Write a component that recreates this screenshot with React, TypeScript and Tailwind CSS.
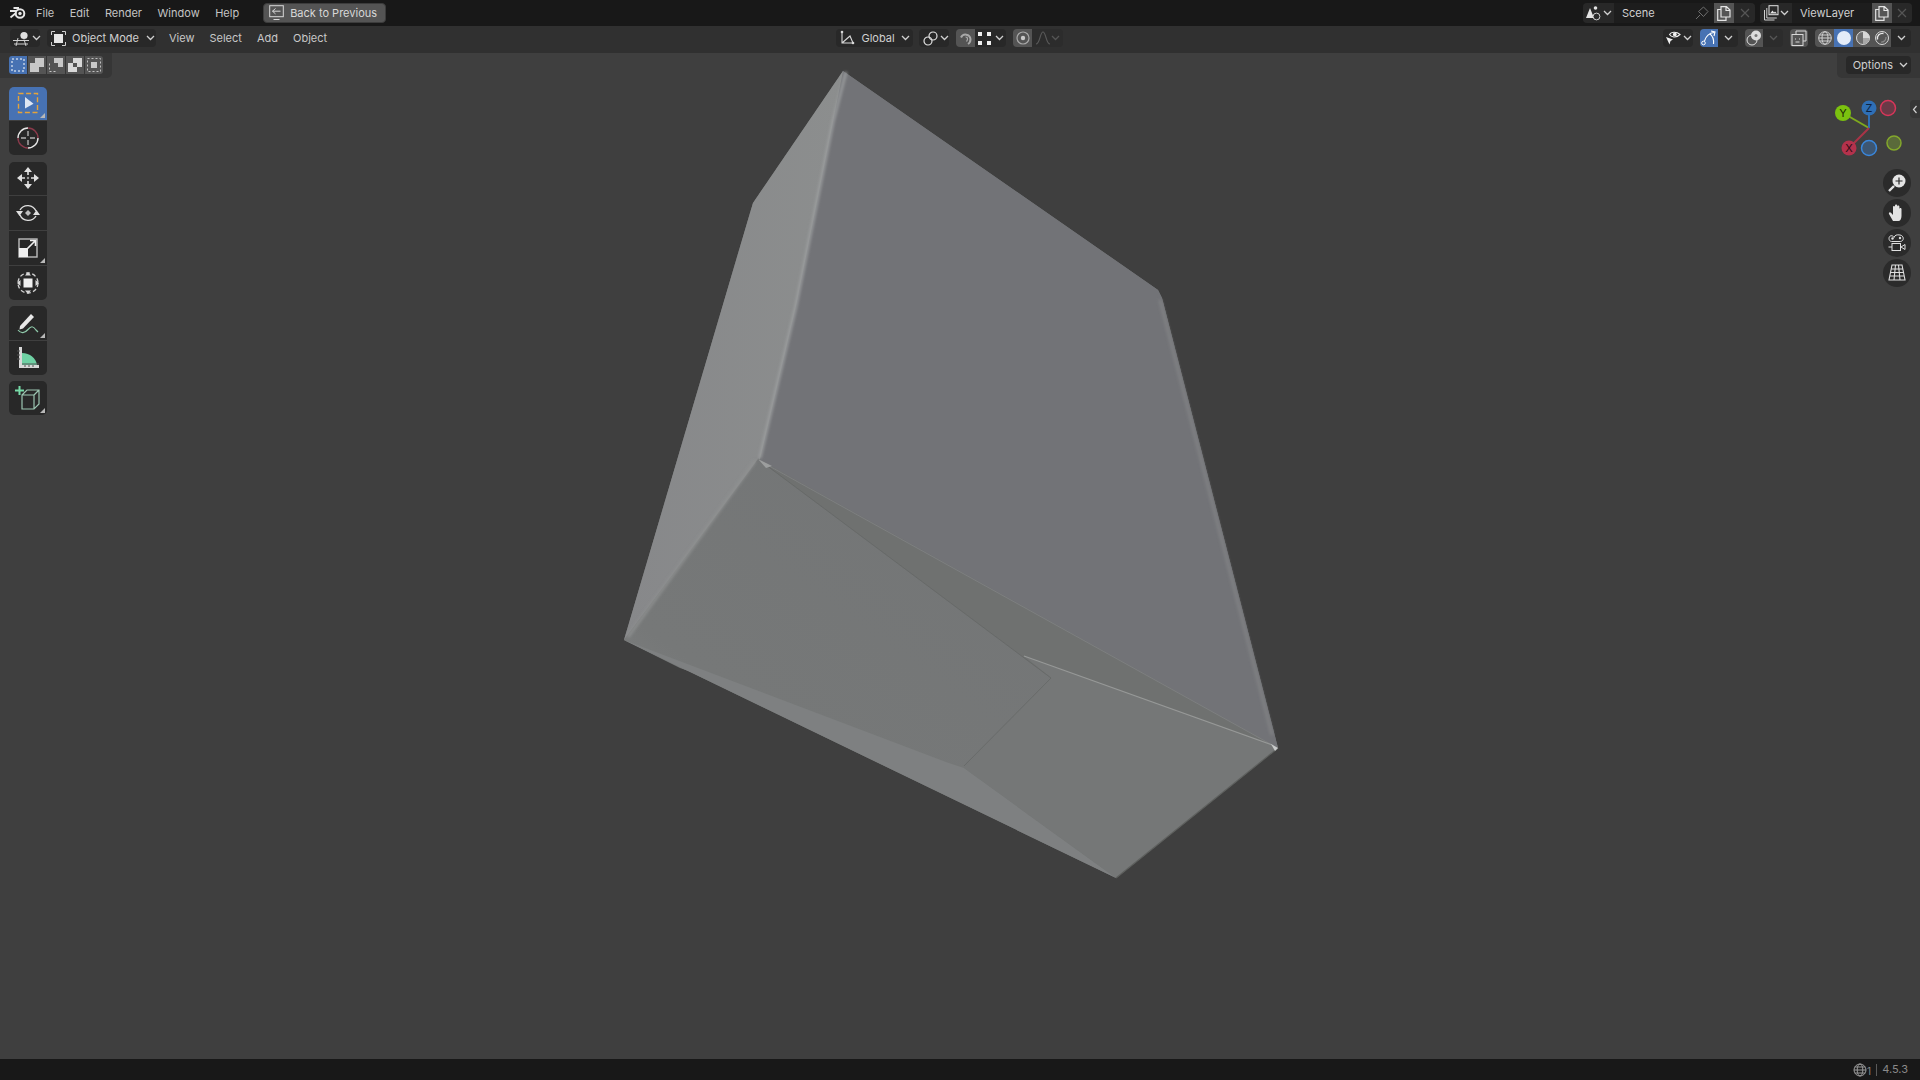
import type { ReactNode } from "react";

const Chevron = ({ dim = false }: { dim?: boolean }) => (
  <svg width="9" height="6" viewBox="0 0 9 6" className="shrink-0">
    <path d="M1 1l3.5 3.5L8 1" fill="none" stroke={dim ? "#555" : "#d0d0d0"} strokeWidth="1.3" />
  </svg>
);

const I = ({ w = 16, h = 16, children }: { w?: number; h?: number; children: ReactNode }) => (
  <svg width={w} height={h} viewBox={`0 0 ${w} ${h}`} className="shrink-0" fill="none" stroke="#d8d8d8" strokeWidth="1">
    {children}
  </svg>
);

const BlenderLogo = () => (
  <svg width="18" height="12" viewBox="0 0 18 12" className="shrink-0">
    <circle cx="11" cy="6.5" r="4.3" fill="none" stroke="#e6e6e6" strokeWidth="2" />
    <circle cx="11" cy="6.5" r="1.7" fill="#e6e6e6" />
    <path d="M10 1H4.5M8 4H1M7 6L1.5 10.5" stroke="#e6e6e6" strokeWidth="1.8" fill="none" />
  </svg>
);

const ViewportIcon = () => (
  <I w={18} h={15}>
    <circle cx="11" cy="4.5" r="3.6" fill="#e0e0e0" stroke="none" />
    <path d="M0 9.5h16M1 13h14M5 7l-2 8M11 8.5l2 6.5" stroke="#cfcfcf" />
  </I>
);

const ObjectIcon = () => (
  <I w={15} h={15}>
    <path d="M0.5 4V.5H4M11 .5h3.5V4M14.5 11v3.5H11M4 14.5H.5V11" stroke="#d0d0d0" />
    <rect x="3" y="3" width="9" height="9" fill="#e6e6e6" stroke="none" />
  </I>
);

const ModeSet = () => (
  <I w={14} h={14}>
    <rect x="1" y="1" width="12" height="12" stroke="#fff" strokeDasharray="2 2" />
  </I>
);
const ModeExtend = () => (
  <I w={14} h={14}>
    <path d="M5 0h9v9h-5v5H0V5h5z" fill="#c8c8c8" stroke="none" />
  </I>
);
const ModeSubtract = () => (
  <I w={14} h={14}>
    <path d="M5 0h9v9H9V5H5z" fill="#c8c8c8" stroke="none" />
    <path d="M.5 5.5v8h8" stroke="#c8c8c8" strokeDasharray="2 2" />
  </I>
);
const ModeInvert = () => (
  <I w={14} h={14}>
    <path d="M5 0h9v9H9V5H5zM0 5h5v4h4v5H0z" fill="#d8d8d8" stroke="none" />
  </I>
);
const ModeIntersect = () => (
  <I w={14} h={14}>
    <rect x=".5" y=".5" width="13" height="13" stroke="#c0c0c0" strokeDasharray="2 2" />
    <rect x="4" y="4" width="6" height="6" fill="#c8c8c8" stroke="none" />
  </I>
);

const GlobalIcon = () => (
  <I w={16} h={16}>
    <path d="M3 2v11h11M3 13L11 6l3 7" stroke="#d8d8d8" strokeWidth="1.1" />
    <circle cx="3" cy="2" r="1.3" fill="#d8d8d8" stroke="none" />
    <circle cx="14" cy="13" r="1.3" fill="#d8d8d8" stroke="none" />
  </I>
);
const LinkIcon = () => (
  <I w={15} h={15}>
    <circle cx="5" cy="10" r="4" stroke="#e0e0e0" strokeWidth="1.2" />
    <circle cx="10" cy="5" r="4" stroke="#e0e0e0" strokeWidth="1.2" />
  </I>
);
const MagnetIcon = () => (
  <I w={15} h={15}>
    <path d="M3 6.5a5 5 0 0 1 9.5 1.5c0 2-.8 4-2.5 5" stroke="#a8a8a8" strokeWidth="2" />
    <path d="M7.5 6a1.8 1.8 0 0 1 2 2c0 1-.5 1.5-1 2.5" stroke="#a8a8a8" strokeWidth="1.2" />
  </I>
);
const VertsIcon = () => (
  <I w={13} h={13}>
    <path d="M0 0h4v4H0zM9 0h4v4H9zM0 9h4v4H0zM9 9h4v4H9z" fill="#f0f0f0" stroke="none" />
  </I>
);
const PropIcon = () => (
  <I w={14} h={14}>
    <circle cx="7" cy="7" r="6" stroke="#a8a8a8" strokeWidth="1.2" />
    <circle cx="7" cy="7" r="2.2" fill="#c8c8c8" stroke="none" />
  </I>
);
const FalloffIcon = () => (
  <I w={16} h={14}>
    <path d="M1 13c4 0 4-12 7-12s3 12 7 12" stroke="#585858" strokeWidth="1.2" />
  </I>
);

const SceneIcon = () => (
  <I w={16} h={16}>
    <path d="M0 13L4 3l4 10z" fill="#e4e4e4" stroke="none" />
    <circle cx="9.5" cy="3" r="1.8" fill="#e4e4e4" stroke="none" />
    <circle cx="10.5" cy="11.5" r="3.4" fill="#2a2a2a" stroke="#d0d0d0" />
  </I>
);
const PinIcon = () => (
  <I w={14} h={14}>
    <path d="M1 13l4-4M3.5 5.5L8.5 1 13 5.5l-4.5 5z" stroke="#6e6e6e" />
  </I>
);
const CopyIcon = () => (
  <I w={14} h={15}>
    <path d="M4 3.5H.7v10.8H9V11.5M4 .7h5.5L13 4v7H4zM9 .7V4.5h4" stroke="#e4e4e4" strokeWidth="1.2" />
  </I>
);
const CloseIcon = () => (
  <I w={10} h={10}>
    <path d="M1 1l8 8M9 1L1 9" stroke="#555" strokeWidth="1.2" />
  </I>
);
const LayerIcon = () => (
  <I w={16} h={16}>
    <path d="M1.5 5v10h10M3.8 3v10h10" stroke="#cfcfcf" />
    <rect x="6" y=".7" width="9" height="9" fill="#2a2a2a" stroke="#e4e4e4" />
    <path d="M7 8.5l2.5-3 1.5 2 1-1 2 2z" fill="#e4e4e4" stroke="none" />
  </I>
);

const VisIcon = () => (
  <I w={16} h={16}>
    <path d="M4.5 4.5C6 2 11 1 15 4.5 11 8.5 6 7 4.5 4.5z" stroke="#f0f0f0" strokeWidth="1.1" />
    <circle cx="9.8" cy="4.4" r="1.9" fill="#f0f0f0" stroke="none" />
    <path d="M1 7l7 2.5L5.5 11l-1 3.5z" fill="#f0f0f0" stroke="none" />
  </I>
);
const GizmoIcon = () => (
  <I w={16} h={16}>
    <path d="M3.5 11C5 6 8.500 3 13 2.500M12.500 14c.5-4-.8-8-3.800-10.200M10 1l4 1-1 4" stroke="#fff" strokeWidth="1.1" />
    <circle cx="2.500" cy="13" r="1.800" stroke="#fff" />
  </I>
);
const OverlayIcon = () => (
  <I w={16} h={16}>
    <circle cx="6" cy="10" r="5" stroke="#e0e0e0" />
    <circle cx="10" cy="5.5" r="5" fill="#dcdcdc" stroke="none" />
    <circle cx="10" cy="5.5" r="1.5" fill="#777" stroke="none" />
  </I>
);
const XrayIcon = () => (
  <I w={16} h={16}>
    <path d="M5 4V1h10v10h-3" stroke="#d8d8d8" />
    <rect x="1" y="4.5" width="11" height="11" stroke="#d8d8d8" />
    <path d="M4.5 8.5v1M8.5 8.5v1M4.5 12h4" stroke="#d8d8d8" />
  </I>
);
const WireIcon = () => (
  <I w={14} h={14}>
    <circle cx="7" cy="7" r="6.3" stroke="#d0d0d0" />
    <ellipse cx="7" cy="7" rx="3" ry="6.3" stroke="#d0d0d0" />
    <path d="M.7 7h12.6M1.5 4h11M1.5 10h11" stroke="#d0d0d0" />
  </I>
);
const SolidIcon = () => (
  <I w={14} h={14}>
    <circle cx="7" cy="7" r="7" fill="#e4ecf8" stroke="none" />
  </I>
);
const MaterialIcon = () => (
  <I w={14} h={14}>
    <circle cx="7" cy="7" r="6.5" fill="#6f6f6f" stroke="#d8d8d8" />
    <path d="M7 .5a6.5 6.5 0 0 1 6.5 6.5H7z" fill="#d8d8d8" stroke="none" />
    <path d="M7 7h6.5A6.5 6.5 0 0 1 7 13.5z" fill="#a8a8a8" stroke="none" />
  </I>
);
const RenderIcon = () => (
  <I w={14} h={14}>
    <circle cx="7" cy="7" r="6.5" stroke="#d8d8d8" />
    <path d="M2.5 8.5A5 5 0 0 1 8.5 2.5" stroke="#e8e8e8" strokeWidth="1.4" />
    <path d="M11 6a4.5 4.5 0 0 1-5 5" stroke="#8a8a8a" strokeWidth="1.2" />
  </I>
);

const BackIcon = () => (
  <I w={15} h={16}>
    <rect x=".7" y=".7" width="13.6" height="11" stroke="#d8d8d8" />
    <path d="M3.5 6.2h8M6.5 3.5L3.5 6.2l3 2.7M4.5 14.5h6" stroke="#d8d8d8" />
  </I>
);

const SelectTool = () => (
  <I w={24} h={24}>
    <rect x="2.5" y="2.5" width="19" height="19" stroke="#e4a33b" strokeWidth="1.4" strokeDasharray="5 2.6" />
    <path d="M9 6l8.5 6.8-8.5 4.7z" fill="#dfe6f2" stroke="none" />
  </I>
);
const CursorTool = () => (
  <I w={24} h={24}>
    <path d="M12 2a10 10 0 0 1 10 10" stroke="#8b3a4b" strokeWidth="1.4" />
    <path d="M22 12a10 10 0 0 1-10 10" stroke="#e8e8e8" strokeWidth="1.4" />
    <path d="M12 22A10 10 0 0 1 2 12" stroke="#8b3a4b" strokeWidth="1.4" />
    <path d="M2 12A10 10 0 0 1 12 2" stroke="#e8e8e8" strokeWidth="1.4" />
    <path d="M12 5v5M12 14v5M5 12h5M14 12h5" stroke="#b0b0b0" strokeWidth="1.4" />
  </I>
);
const MoveTool = () => (
  <I w={24} h={24}>
    <path d="M12 1l4 5H8zM12 23l4-5H8zM1 12l5-4v8zM23 12l-5-4v8z" fill="#e0e0e0" stroke="none" />
    <path d="M12 6v3M12 15v3M6 12h3M15 12h3" stroke="#e0e0e0" strokeWidth="1.6" />
    <circle cx="12" cy="12" r="1.2" fill="#999" stroke="none" />
  </I>
);
const RotateTool = () => (
  <I w={24} h={24}>
    <path d="M4 9a9 9 0 0 1 16 1M20 15a9 9 0 0 1-16-1" stroke="#e0e0e0" strokeWidth="1.4" />
    <path d="M0 10h7l-3.5 5zM17 14h7l-3.5-5z" fill="#e0e0e0" stroke="none" />
    <path d="M12 9l3 3-3 3-3-3z" fill="#bdbdbd" stroke="none" />
  </I>
);
const ScaleTool = () => (
  <I w={24} h={24}>
    <rect x="3" y="3" width="18" height="18" stroke="#bdbdbd" strokeWidth="1.4" />
    <rect x="3" y="12" width="9" height="9" fill="#f0f0f0" stroke="none" />
    <path d="M11.5 12.5L19 5M14 4.5h5.5V10" stroke="#f0f0f0" strokeWidth="1.6" />
  </I>
);
const TransformTool = () => (
  <I w={24} h={24}>
    <circle cx="12" cy="12" r="10" stroke="#d0d0d0" strokeWidth="1.3" strokeDasharray="4 2.4" />
    <rect x="7.5" y="7.5" width="9" height="9" fill="#f0f0f0" stroke="none" />
    <path d="M12 1l3 3.5H9zM12 23l3-3.5H9zM1 12l3.5-3v6zM23 12l-3.5-3v6z" fill="#d8d8d8" stroke="none" />
  </I>
);
const AnnotateTool = () => (
  <I w={26} h={24}>
    <path d="M5 15L16 3l3 3L8 17.5l-3.5 1z" fill="#e8e8e8" stroke="none" />
    <path d="M3 19c3 4 7 3 10-.5s5-4 8 .5l2 2" stroke="#8fc9aa" strokeWidth="1.2" />
  </I>
);
const MeasureTool = () => (
  <I w={24} h={24}>
    <path d="M3 1h3v18h17v3H3z" fill="#d8d8d8" stroke="none" />
    <path d="M6 7c8 0 14 5 15 12H6z" fill="#6fd1a4" stroke="none" />
    <path d="M6 18h17M1 5h3M1 9h3M1 13h3M9 19v2M13 19v2M17 19v2" stroke="#555" strokeWidth="1" />
  </I>
);
const AddCubeTool = () => (
  <I w={26} h={26}>
    <path d="M7 10l5-5h12v14l-5 5H7zM7 10h12v14M19 10l5-5" stroke="#9cc6b2" strokeWidth="1.2" />
    <path d="M0 5.5h9M4.5 1v9" stroke="#77dba8" strokeWidth="2" />
  </I>
);

const ZoomNav = () => (
  <I w={20} h={20}>
    <path d="M2 18l5-5" stroke="#e4e4e4" strokeWidth="2.4" />
    <circle cx="12" cy="8" r="6.5" fill="#e4e4e4" stroke="none" />
    <path d="M12 4.5v7M8.500 8h7" stroke="#2a2a2a" strokeWidth="1.2" />
  </I>
);
const HandNav = () => (
  <I w={20} h={20}>
    <path d="M6 18L2 11c-.6-1.500 1-2.500 2-1.200L6 12V4c0-1.500 2-1.500 2 0v5V2.500c0-1.500 2.200-1.500 2.200 0V9V3.500c0-1.500 2.200-1.500 2.200 0V10V6c0-1.500 2.100-1.500 2.100 0v7c0 3-1.500 5-3 5z" fill="#e4e4e4" stroke="none" />
  </I>
);
const CameraNav = () => (
  <I w={20} h={20}>
    <path d="M2 5.500C2 2 6 2 7 4.500 8 2 9.500 1.500 13 2c4 .5 4.500 6 .5 6.500h-9C3 8.500 2 7 2 5.500z" stroke="#e0e0e0" />
    <circle cx="5.500" cy="5.500" r="1.200" fill="#e0e0e0" stroke="none" />
    <circle cx="13" cy="5" r="1.200" fill="#e0e0e0" stroke="none" />
    <rect x="5" y="10.500" width="8.500" height="7" stroke="#e0e0e0" />
    <path d="M1.500 14H5M14 14l4-2.500v5z" stroke="#e0e0e0" />
  </I>
);
const GridNav = () => (
  <I w={20} h={20}>
    <path d="M5 2h10l3 15H2zM3.500 9.500h13M2.700 13h14.600M8.500 2l-1.500 15M11.500 2l1.500 15M4.500 6h11" stroke="#e0e0e0" strokeWidth="1.100" />
  </I>
);

const Corner = () => (
  <svg width="5" height="5" viewBox="0 0 5 5" className="absolute right-0.5 bottom-0.5">
    <path d="M5 0v5H0z" fill="#b8b8b8" />
  </svg>
);

const Tool = ({ active, corner, children }: { active?: boolean; corner?: boolean; children: ReactNode }) => (
  <div className={`relative h-[33.75px] w-[38px] flex items-center justify-center first:rounded-t-[5px] last:rounded-b-[5px] ${active ? "bg-[#4772b3]" : "bg-[#282828]"}`}>
    {children}
    {corner && <Corner />}
  </div>
);

const HBtn = ({ className, children }: { className?: string; children: ReactNode }) => (
  <div className={`h-[18px] flex items-center justify-center gap-1 ${className ?? ""}`}>{children}</div>
);

const NavBtn = ({ children }: { children: ReactNode }) => (
  <div className="w-7 h-7 rounded-full bg-[#2b2b2b] flex items-center justify-center">{children}</div>
);

const TopBar = () => (
  <div className="h-[26px] shrink-0 bg-[#181818] flex items-center text-[11px] text-[#c4c4c4]">
    <div className="ml-[9px] w-[27px]"><BlenderLogo /></div>
    <div className="flex gap-[15.5px]">
      <span>File</span>
      <span>Edit</span>
      <span>Render</span>
      <span>Window</span>
      <span>Help</span>
    </div>
    <div className="ml-[24px] w-[123px] h-5 rounded-[4px] bg-[#545454] flex items-center pl-[5px] gap-[6px] text-[#d8d8d8] border border-[#3c3c3c]">
      <BackIcon />
      <span>Back to Previous</span>
    </div>
    <div className="ml-auto flex items-center gap-[5px] mr-2">
      <div className="flex h-5 rounded-[4px] overflow-hidden bg-[#1d1d1d]">
        <div className="w-[31px] flex items-center justify-center gap-px bg-[#282828]"><SceneIcon /><Chevron /></div>
        <div className="w-[100px] flex items-center justify-between pl-2 pr-[5px] bg-[#1d1d1d] text-[#d0d0d0]">Scene<PinIcon /></div>
        <div className="w-5 bg-[#545454] flex items-center justify-center"><CopyIcon /></div>
        <div className="w-[21px] bg-[#282828] flex items-center justify-center"><CloseIcon /></div>
      </div>
      <div className="flex h-5 rounded-[4px] overflow-hidden bg-[#1d1d1d]">
        <div className="w-8 flex items-center justify-center gap-px bg-[#282828]"><LayerIcon /><Chevron /></div>
        <div className="w-[80px] flex items-center pl-2 bg-[#1d1d1d] text-[#d0d0d0]">ViewLayer</div>
        <div className="w-5 bg-[#545454] flex items-center justify-center"><CopyIcon /></div>
        <div className="w-5 bg-[#282828] flex items-center justify-center"><CloseIcon /></div>
      </div>
    </div>
  </div>
);

const HeaderBar = () => (
  <div className="h-[27px] shrink-0 bg-[#303030] flex items-center pb-[3px] text-[11px] text-[#c8c8c8] relative">
    <HBtn className="ml-[10px] w-[30px] rounded-[4px] bg-[#282828] justify-start! pl-[3px] gap-px!"><ViewportIcon /><Chevron /></HBtn>
    <HBtn className="ml-[7px] w-[109px] rounded-[4px] bg-[#282828] justify-start! pl-[4px] gap-[6px]!">
      <ObjectIcon />
      <span className="text-[#d0d0d0] w-[68px] whitespace-nowrap">Object Mode</span>
      <Chevron />
    </HBtn>
    <div className="ml-[13px] flex gap-[15px]">
      <span>View</span>
      <span>Select</span>
      <span>Add</span>
      <span>Object</span>
    </div>
    <div className="absolute left-[836px] top-[3px] flex items-center">
      <HBtn className="w-[77px] rounded-[4px] bg-[#282828] gap-[6px]!">
        <GlobalIcon />
        <span className="text-[#d0d0d0]">Global</span>
        <Chevron />
      </HBtn>
      <HBtn className="ml-[6px] w-[30px] rounded-[4px] bg-[#282828] justify-start! pl-[4px] gap-[2px]!"><LinkIcon /><Chevron /></HBtn>
      <div className="ml-[7px] flex rounded-[4px] overflow-hidden">
        <HBtn className="w-[19px] bg-[#545454]"><MagnetIcon /></HBtn>
        <HBtn className="w-[31px] bg-[#282828]"><VertsIcon /><Chevron /></HBtn>
      </div>
      <div className="ml-[7px] flex rounded-[4px] overflow-hidden">
        <HBtn className="w-[19px] bg-[#545454]"><PropIcon /></HBtn>
        <HBtn className="w-[31px] bg-[#2c2c2c] gap-0!"><FalloffIcon /><Chevron dim /></HBtn>
      </div>
    </div>
    <div className="ml-auto mr-[9px] flex items-center gap-[7px]">
      <HBtn className="w-[30px] rounded-[4px] bg-[#282828] gap-[2px]!"><VisIcon /><Chevron /></HBtn>
      <div className="flex rounded-[4px] overflow-hidden">
        <HBtn className="w-[18px] bg-[#4772b3]"><GizmoIcon /></HBtn>
        <HBtn className="w-5 bg-[#282828]"><Chevron /></HBtn>
      </div>
      <div className="flex rounded-[4px] overflow-hidden">
        <HBtn className="w-[18px] bg-[#545454]"><OverlayIcon /></HBtn>
        <HBtn className="w-5 bg-[#2c2c2c]"><Chevron dim /></HBtn>
      </div>
      <HBtn className="w-[18px] rounded-[4px] bg-[#545454]"><XrayIcon /></HBtn>
      <div className="flex rounded-[4px] overflow-hidden">
        <HBtn className="w-[19px] bg-[#545454]"><WireIcon /></HBtn>
        <HBtn className="w-[19px] bg-[#4772b3]"><SolidIcon /></HBtn>
        <HBtn className="w-[19px] bg-[#545454]"><MaterialIcon /></HBtn>
        <HBtn className="w-[19px] bg-[#545454]"><RenderIcon /></HBtn>
        <HBtn className="w-5 bg-[#282828]"><Chevron /></HBtn>
      </div>
    </div>
  </div>
);

const Viewport = () => (
  <div className="relative flex-1 bg-[#3f3f3f] overflow-hidden">
    <svg className="absolute inset-0 w-full h-full" viewBox="0 53 1920 1006" preserveAspectRatio="none">
      <defs>
        <filter id="soft" x="-20%" y="-20%" width="140%" height="140%"><feGaussianBlur stdDeviation="1.4" /></filter>
        <linearGradient id="leftF" x1="0" y1="0" x2="1" y2="0">
          <stop offset="0" stopColor="#87888a" />
          <stop offset="1" stopColor="#8c8e8e" />
        </linearGradient>
        <linearGradient id="lowF" x1="1" y1="0" x2="0" y2="1">
          <stop offset="0" stopColor="#737576" />
          <stop offset="0.75" stopColor="#767878" />
          <stop offset="1" stopColor="#808283" />
        </linearGradient>
      </defs>
      <path d="M843 71L1158 290L1162 298L1278 748L1116 878L624 640L750 213L753 203z" fill="#757777" />
      <path d="M843 71L1158 290L1162 298L1278 748L760 460z" fill="#727377" />
      <path d="M843 71L753 203L750 213L624 640L760 459L796 306L833 122z" fill="url(#leftF)" />
      <path d="M758 459L624 640L680 668L946 762L964 766L1051 678z" fill="url(#lowF)" />
      <path d="M624 640L1116 878L964 768L946 762z" fill="#7e8081" />
      <path d="M1024 656L1051 678L964 768L1116 878L1278 748z" fill="#757777" />
      <path d="M758 459L1278 748L1024 656L1051 678z" fill="#6f7170" />
      <path d="M846 72L833 122L796 306L760 458" fill="none" stroke="#9fa1a2" strokeWidth="2.500" filter="url(#soft)" />
      <path d="M1160 300L1272 735" fill="none" stroke="#808183" strokeWidth="3" filter="url(#soft)" />
      <path d="M755 461L628 637" fill="none" stroke="#909292" strokeWidth="2.500" filter="url(#soft)" />
      <path d="M762 462L1274 746" fill="none" stroke="#7d7f80" strokeWidth="1" />
      <path d="M1024 656L1272 745" fill="none" stroke="#969897" strokeWidth="1.300" />
      <path d="M758 459L1051 678" fill="none" stroke="#656766" strokeWidth="0.800" />
      <path d="M1051 678L964 766" fill="none" stroke="#666867" strokeWidth="0.800" />
      <path d="M1116 878L1278 748" fill="none" stroke="#5e605e" strokeWidth="1.200" />
      <path d="M1271 744L1278 748L1275 751z" fill="#c8caca" />
      <path d="M758 459L772 466L766 468z" fill="#9c9e9e" />
    </svg>

    <div className="absolute left-0 top-0 h-[25px] w-[112px] rounded-br-[5px] bg-[#363636] flex items-start pt-[3px] pl-[9px]">
      <div className="flex h-[18px] rounded-[3px] overflow-hidden gap-px">
        <div className="w-[18px] bg-[#4772b3] flex items-center justify-center"><ModeSet /></div>
        <div className="w-[18px] bg-[#545454] flex items-center justify-center"><ModeExtend /></div>
        <div className="w-[18px] bg-[#545454] flex items-center justify-center"><ModeSubtract /></div>
        <div className="w-[18px] bg-[#545454] flex items-center justify-center"><ModeInvert /></div>
        <div className="w-[18px] bg-[#545454] flex items-center justify-center"><ModeIntersect /></div>
      </div>
    </div>

    <div className="absolute right-0 top-0 h-[25px] w-[83px] rounded-bl-[5px] bg-[#363636] flex items-start pt-[3px] pl-[9px]">
      <div className="w-[65px] h-[18px] rounded-[4px] bg-[#282828] flex items-center justify-end pr-[3px] gap-[6px] text-[11px] text-[#d0d0d0]">
        Options<Chevron />
      </div>
    </div>

    <div className="absolute left-[9px] top-[33.5px] flex flex-col gap-[6.5px]">
      <div className="flex flex-col gap-px">
        <Tool active corner><SelectTool /></Tool>
        <Tool><CursorTool /></Tool>
      </div>
      <div className="flex flex-col gap-px">
        <Tool><MoveTool /></Tool>
        <Tool><RotateTool /></Tool>
        <Tool corner><ScaleTool /></Tool>
        <Tool><TransformTool /></Tool>
      </div>
      <div className="flex flex-col gap-px">
        <Tool corner><AnnotateTool /></Tool>
        <Tool><MeasureTool /></Tool>
      </div>
      <div className="flex flex-col gap-px">
        <Tool corner><AddCubeTool /></Tool>
      </div>
    </div>

    <svg className="absolute left-[1830px] top-[42px]" width="75" height="70" viewBox="0 0 75 70">
      <path d="M39 33L13 18" stroke="#7fa91e" strokeWidth="2" />
      <path d="M39 33V14" stroke="#2f6fb5" strokeWidth="2" />
      <path d="M39 33L19 53" stroke="#a93347" strokeWidth="2" />
      <circle cx="58" cy="13" r="7.500" fill="#6a3a47" stroke="#d8365a" strokeWidth="1.500" />
      <circle cx="64" cy="48" r="7" fill="#5a6a3a" stroke="#84a82c" strokeWidth="1.500" />
      <circle cx="39" cy="53" r="7.500" fill="#3d5672" stroke="#3a87dc" strokeWidth="1.500" />
      <circle cx="13" cy="18" r="8" fill="#7bc20f" />
      <circle cx="39" cy="13" r="7.500" fill="#2f6fb5" />
      <circle cx="19" cy="53" r="7.500" fill="#b3324c" />
      <text x="13" y="22" textAnchor="middle" fontSize="11" fontFamily="Inter, sans-serif" fill="#1c2b05">Y</text>
      <text x="39" y="17" textAnchor="middle" fontSize="11" fontFamily="Inter, sans-serif" fill="#0d2340">Z</text>
      <text x="19" y="57" textAnchor="middle" fontSize="11" fontFamily="Inter, sans-serif" fill="#2d0c14">X</text>
    </svg>

    <div className="absolute right-0 top-[47px] h-[18px] w-[10px] rounded-l-[4px] bg-[#363636] flex items-center justify-center">
      <svg width="6" height="9" viewBox="0 0 6 9"><path d="M4.500 1L1.500 4.500 4.500 8" fill="none" stroke="#d0d0d0" strokeWidth="1.200" /></svg>
    </div>

    <div className="absolute right-[9px] top-[116px] flex flex-col gap-[2px]">
      <NavBtn><ZoomNav /></NavBtn>
      <NavBtn><HandNav /></NavBtn>
      <NavBtn><CameraNav /></NavBtn>
      <NavBtn><GridNav /></NavBtn>
    </div>
  </div>
);

const StatusBar = () => (
  <div className="h-[21px] shrink-0 bg-[#181818] flex items-center justify-end pr-3 text-[11px] text-[#8a8a8a]">
    <svg width="14" height="14" viewBox="0 0 14 14" fill="none" stroke="#9a9a9a" strokeWidth="1">
      <circle cx="7" cy="7" r="6" />
      <ellipse cx="7" cy="7" rx="2.800" ry="6" />
      <path d="M1 7h12M1.800 4h10.400M1.800 10h10.400" />
    </svg>
    <span className="text-[10px] self-end mb-[1px]">1</span>
    <span className="mx-[5px] w-px h-3 bg-[#5a5a5a]" />
    <span>4.5.3</span>
  </div>
);

export default function App() {
  return (
    <div className="w-[1920px] h-[1080px] flex flex-col overflow-hidden font-['Inter',sans-serif]">
      <TopBar />
      <HeaderBar />
      <Viewport />
      <StatusBar />
    </div>
  );
}
